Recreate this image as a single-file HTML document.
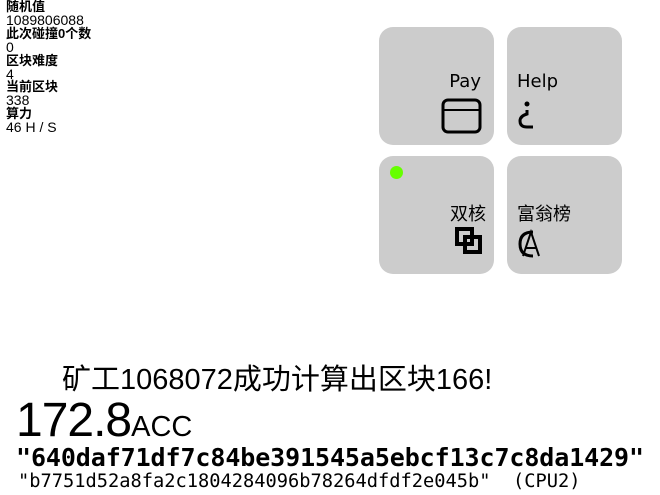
<!DOCTYPE html>
<html><head><meta charset="utf-8"><style>
body{margin:0;width:660px;height:495px;background:#fff;position:relative;overflow:hidden;font-family:"Liberation Sans","Noto Sans CJK SC",sans-serif;color:#000}
.info{position:absolute;left:6px;top:0px;font-size:14px;line-height:12.9px}
.info b{font-size:13px}
.t{position:absolute;width:115px;height:118px;background:#ccc;border-radius:14px}
.lbl{position:absolute;font-size:18px;font-family:"DejaVu Sans","Noto Sans CJK SC",sans-serif}
.dot{position:absolute;left:11px;top:10px;width:13px;height:13px;border-radius:50%;background:#66ff00}
.mono{position:absolute;font-family:"DejaVu Sans Mono","Liberation Mono",monospace;white-space:pre}
</style></head><body>
<div class="info"><b>随机值</b><br>1089806088<br><b>此次碰撞0个数</b><br>0<br><b>区块难度</b><br>4<br><b>当前区块</b><br>338<br><b>算力</b><br>46 H / S</div>

<div class="t" style="left:379px;top:27px">
 <div class="lbl" style="right:13px;top:44px">Pay</div>
 <svg style="position:absolute;left:62px;top:71px" width="42" height="38"><rect x="2" y="2" width="37" height="32" rx="5" fill="none" stroke="#000" stroke-width="3"/><line x1="2" y1="12" x2="39" y2="12" stroke="#000" stroke-width="2"/></svg>
</div>
<div class="t" style="left:507px;top:27px">
 <div class="lbl" style="left:10px;top:44px">Help</div>
 <svg style="position:absolute;left:10px;top:73px" width="20" height="30"><circle cx="10" cy="4" r="2.5"/><path d="M10 10 V14 Q3 16 3 21 Q3 27 10 27 H16" fill="none" stroke="#000" stroke-width="3"/></svg>
</div>
<div class="t" style="left:379px;top:156px">
 <div class="dot"></div>
 <div class="lbl" style="right:8px;top:44px">双核</div>
 <svg style="position:absolute;left:76px;top:71px" width="28" height="28"><rect x="2" y="2" width="15" height="15" fill="none" stroke="#000" stroke-width="4"/><rect x="10" y="10" width="15" height="15" fill="none" stroke="#000" stroke-width="4"/></svg>
</div>
<div class="t" style="left:507px;top:156px">
 <div class="lbl" style="left:10px;top:44px">富翁榜</div>
 <svg style="position:absolute;left:10px;top:73px" width="26" height="30"><path d="M16 3 Q3 3 3 15 Q3 27 16 27" fill="none" stroke="#000" stroke-width="3"/><path d="M6 27 L14 3 L22 27 M9 19 H19" fill="none" stroke="#000" stroke-width="2"/></svg>
</div>

<div style="position:absolute;left:62px;top:356px;font-size:29px">矿工1068072成功计算出区块166!</div>
<div style="position:absolute;left:16px;top:393px;font-size:48px;letter-spacing:-1px">172.8<span style="font-size:29px;letter-spacing:0">ACC</span></div>
<div class="mono" style="left:16px;top:443px;font-size:25px;font-weight:bold;letter-spacing:-0.1px">"640daf71df7c84be391545a5ebcf13c7c8da1429"</div>
<div class="mono" style="left:18px;top:471px;font-size:18.7px">"b7751d52a8fa2c1804284096b78264dfdf2e045b"  (CPU2)</div>
</body></html>
